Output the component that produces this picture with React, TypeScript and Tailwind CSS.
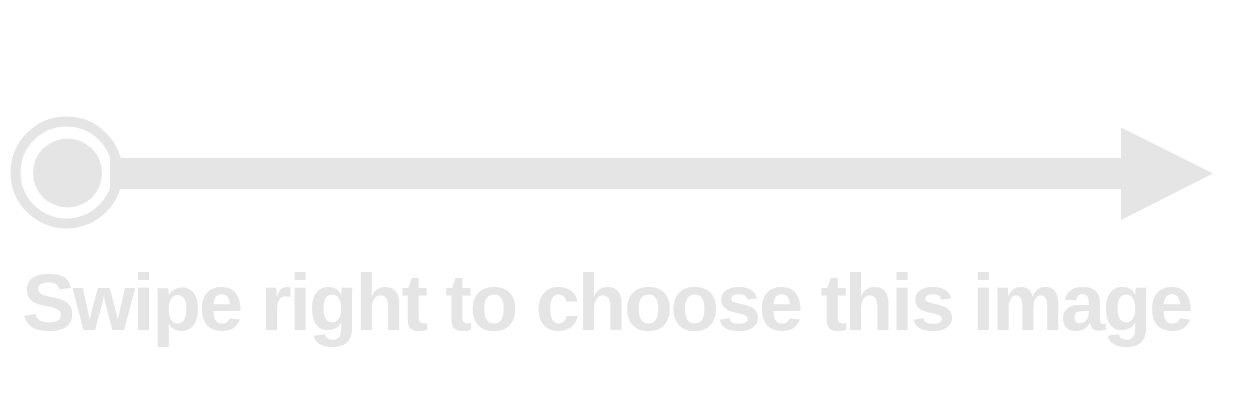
export default function App() {
  return (
    <div className="w-[1255px] h-[404px] bg-white flex flex-col pt-[110px] overflow-hidden">
      {/* swipe arrow */}
      <svg width="1255" height="125" viewBox="0 110 1255 125" className="block shrink-0">
        <rect x="110" y="158" width="1012" height="31" fill="#e5e5e5" />
        <polygon points="1121,127.5 1213,173.5 1121,220" fill="#e5e5e5" />
        <circle cx="66.5" cy="172.5" r="51" fill="none" stroke="#e5e5e5" strokeWidth="10" />
        <circle cx="67.5" cy="173" r="34.5" fill="#e5e5e5" />
      </svg>
      <div
        className="mt-[28px] pl-[22px] text-[80px] leading-[80px] font-bold tracking-[-2.5px] text-[#e5e5e5] whitespace-nowrap"
        style={{ fontFamily: '"Liberation Sans", Arial, sans-serif' }}
      >
        Swipe right to choose this image
      </div>
    </div>
  )
}
